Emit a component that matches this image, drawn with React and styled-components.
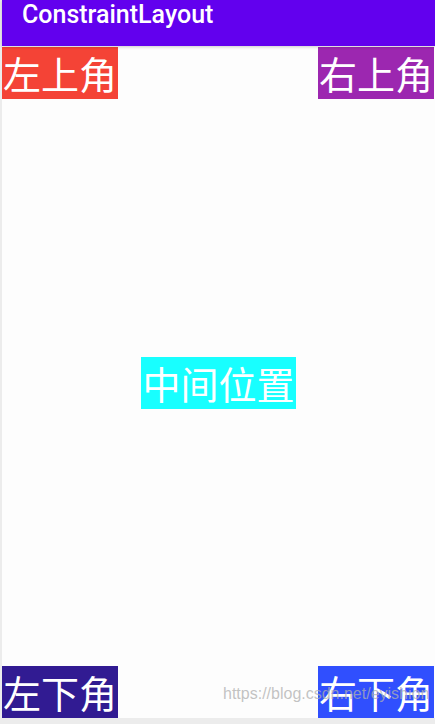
import React from "react";
import styled, { createGlobalStyle } from "styled-components";

const GlobalStyle = createGlobalStyle`
  html, body {
    margin: 0;
    padding: 0;
    background: #ececec;
  }
`;

const corners = {
  topLeft: { text: "左上角", bg: "#f44336" },
  topRight: { text: "右上角", bg: "#9c27b0" },
  center: { text: "中间位置", bg: "#18ffff" },
  bottomLeft: { text: "左下角", bg: "#311b92" },
  bottomRight: { text: "右下角", bg: "#304ffe" },
};

const App = () => {
  return (
    <Screen>
      <GlobalStyle />
      <Phone>
        <AppBar>
          <Title>ConstraintLayout</Title>
        </AppBar>

        <Body>
          <Row>
            <Label $bg={corners.topLeft.bg}>{corners.topLeft.text}</Label>
            <Label $bg={corners.topRight.bg}>{corners.topRight.text}</Label>
          </Row>

          <Middle>
            <Label $bg={corners.center.bg}>{corners.center.text}</Label>
          </Middle>

          <Row>
            <Label $bg={corners.bottomLeft.bg}>{corners.bottomLeft.text}</Label>
            <Label $bg={corners.bottomRight.bg}>{corners.bottomRight.text}</Label>
          </Row>

          {/* csdn watermark over the bottom-right label */}
          <Watermark>https://blog.csdn.net/eyishion</Watermark>
        </Body>
      </Phone>
    </Screen>
  );
};

export default App;

const Screen = styled.div`
  width: 435px;
  height: 724px;
  box-sizing: border-box;
  padding: 0 0 6px 2px;
  background: #ececec;
  overflow: hidden;
`;

const Phone = styled.div`
  display: flex;
  flex-direction: column;
  height: 100%;
  background: #fdfdfd;
`;

const AppBar = styled.header`
  position: relative;
  z-index: 1;
  height: 46px;
  flex-shrink: 0;
  display: flex;
  align-items: flex-start;
  padding: 0 0 0 20px;
  background: #6200ee;
  box-shadow: 0 1px 3px rgba(0, 0, 0, 0.2);
`;

const Title = styled.h1`
  margin: 0;
  color: #ffffff;
  font-family: Roboto, "Noto Sans", sans-serif;
  font-weight: 500;
  font-size: 25px;
  line-height: 30px;
`;

const Body = styled.main`
  position: relative;
  flex: 1;
  display: grid;
  grid-template-rows: auto 1fr auto;
  padding-top: 1px;
`;

const Row = styled.div`
  display: flex;
  justify-content: space-between;
  padding-right: 1px;
`;

const Middle = styled.div`
  display: flex;
  align-items: center;
  justify-content: center;
`;

const Label = styled.div`
  background: ${(p) => p.$bg};
  color: #ffffff;
  font-family: "Noto Sans CJK SC", "Noto Sans", sans-serif;
  font-size: 38px;
  line-height: 52px;
  height: 52px;
  padding: 0 1px;
  white-space: nowrap;
`;

const Watermark = styled.span`
  position: absolute;
  left: 221px;
  bottom: 15px;
  color: rgba(175, 175, 175, 0.75);
  font-family: "Liberation Sans", Arial, sans-serif;
  font-size: 16px;
  pointer-events: none;
`;
